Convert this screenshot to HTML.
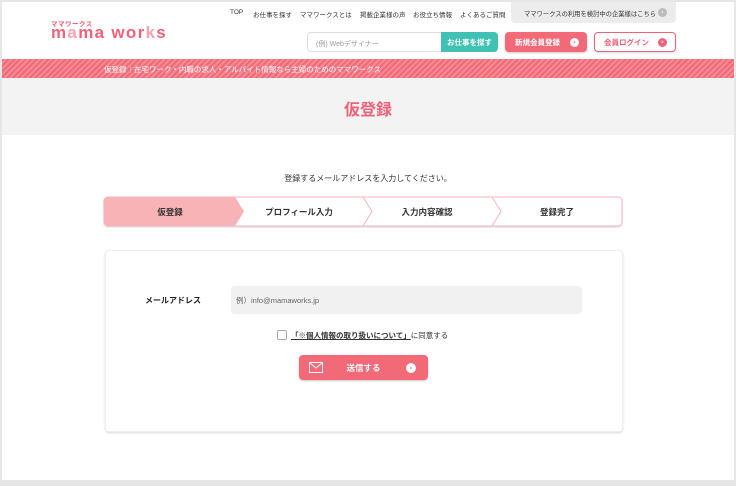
<!DOCTYPE html>
<html><head><meta charset="utf-8"><style>
*{margin:0;padding:0;box-sizing:border-box}
body{width:736px;height:486px;background:#e6e6e6;font-family:"Liberation Sans","Noto Sans CJK JP",sans-serif;position:relative;overflow:hidden;color:#333}
.a{position:absolute}
.page{left:2px;top:2px;width:732px;height:478px;background:#fff}
.nav{font-size:6.5px;color:#333;white-space:nowrap}
.stripe{left:2px;top:59px;width:732px;height:19px;background:repeating-linear-gradient(135deg,#f06a78 0 2px,#f48a95 2px 4px)}
.btn{border-radius:4px;font-size:7.5px;font-weight:bold;display:flex;align-items:center}
.circ{width:9px;height:9px;border-radius:50%;background:#fff;position:absolute;right:8px;top:50%;margin-top:-4.5px;font-size:7px;line-height:9px;text-align:center;font-weight:bold;font-family:"DejaVu Sans",sans-serif}
</style></head><body>
<div class="a page"></div>
<!-- logo -->
<div class="a" style="left:51px;top:18px;font-size:6.5px;color:#f0627a;letter-spacing:.5px;font-weight:bold">ママワークス</div>
<div class="a" style="left:51px;top:24px;font-size:17px;font-weight:bold;color:#f0627a;letter-spacing:1.3px;line-height:18px">m<span style="color:#f7a2ae">a</span>ma wor<span style="color:#f7a2ae">k</span>s</div>
<!-- top nav -->
<div class="a nav" style="left:230px;top:9px">TOP</div>
<div class="a nav" style="left:253px;top:9px">お仕事を探す</div>
<div class="a nav" style="left:300px;top:9px">ママワークスとは</div>
<div class="a nav" style="left:360px;top:9px">掲載企業様の声</div>
<div class="a nav" style="left:413px;top:9px">お役立ち情報</div>
<div class="a nav" style="left:460px;top:9px">よくあるご質問</div>
<div class="a" style="left:511px;top:2px;width:165px;height:21px;background:#ececec;border-radius:0 0 4px 4px"></div>
<div class="a nav" style="left:524px;top:9px;font-size:6.3px">ママワークスの利用を検討中の企業様はこちら</div>
<div class="a circ" style="left:658px;top:8px;margin:0;background:#bbb;color:#ececec">›</div>
<!-- search -->
<div class="a" style="left:307px;top:32px;width:136px;height:20px;border:1px solid #ddd;border-radius:4px 0 0 4px;font-size:7px;color:#999;padding:6px 8px">(例) Webデザイナー</div>
<div class="a btn" style="left:441px;top:32px;width:57px;height:20px;background:#3fc2b3;color:#fff;border-radius:0 4px 4px 0;justify-content:center">お仕事を探す</div>
<div class="a btn" style="left:505px;top:32px;width:82px;height:20px;background:#f26a78;color:#fff;padding-left:10px;box-shadow:0 1px 2px rgba(0,0,0,.2)">新規会員登録<span class="circ" style="color:#f26a78">›</span></div>
<div class="a btn" style="left:594px;top:32px;width:82px;height:20px;background:#fff;color:#f0627a;border:1px solid #f0627a;padding-left:9px;box-shadow:0 1px 2px rgba(0,0,0,.15)">会員ログイン<span class="circ" style="background:#f0627a;color:#fff">›</span></div>
<!-- stripe -->
<div class="a stripe"></div>
<div class="a" style="left:104px;top:64px;font-size:7.5px;color:#fff;white-space:nowrap">仮登録｜在宅ワーク・内職の求人・アルバイト情報なら主婦のためのママワークス</div>
<!-- title band -->
<div class="a" style="left:2px;top:78px;width:732px;height:57px;background:#f3f3f3"></div>
<div class="a" style="left:0;top:96px;width:736px;text-align:center;font-size:16px;font-weight:bold;color:#f0627a">仮登録</div>
<div class="a" style="left:0;top:173px;width:736px;text-align:center;font-size:8px;color:#333">登録するメールアドレスを入力してください。</div>
<!-- steps -->
<svg class="a" style="left:103px;top:196px" width="521" height="32" viewBox="0 0 521 32">
<defs><filter id="s"><feDropShadow dx="0" dy="1" stdDeviation="0.7" flood-opacity=".15"/></filter></defs>
<rect x="1" y="1" width="518" height="29" rx="4" fill="#fff" stroke="#f6b5bb" filter="url(#s)"/>
<path d="M5 1 H132 L141 15.5 L132 30 H5 Q1 30 1 26 V5 Q1 1 5 1Z" fill="#f7b3b5"/>
<path d="M260 1 L269 15.5 L260 30" fill="none" stroke="#f6b5bb"/>
<path d="M389 1 L398 15.5 L389 30" fill="none" stroke="#f6b5bb"/>
<text x="67" y="19" font-size="8.5" font-weight="bold" fill="#333" text-anchor="middle" font-family="Liberation Sans,Noto Sans CJK JP,sans-serif">仮登録</text>
<text x="196" y="19" font-size="8.5" font-weight="bold" fill="#333" text-anchor="middle" font-family="Liberation Sans,Noto Sans CJK JP,sans-serif">プロフィール入力</text>
<text x="324" y="19" font-size="8.5" font-weight="bold" fill="#333" text-anchor="middle" font-family="Liberation Sans,Noto Sans CJK JP,sans-serif">入力内容確認</text>
<text x="454" y="19" font-size="8.5" font-weight="bold" fill="#333" text-anchor="middle" font-family="Liberation Sans,Noto Sans CJK JP,sans-serif">登録完了</text>
</svg>
<!-- form card -->
<div class="a" style="left:105px;top:250px;width:518px;height:182px;background:#fff;border:1px solid #eee;border-radius:4px;box-shadow:0 1px 2px rgba(0,0,0,.15)"></div>
<div class="a" style="left:145px;top:295px;font-size:8px;font-weight:bold;color:#222">メールアドレス</div>
<div class="a" style="left:231px;top:286px;width:351px;height:28px;background:#f1f1f1;border-radius:4px;font-size:7.5px;color:#666;padding:9px 5px">例）info@mamaworks.jp</div>
<div class="a" style="left:277px;top:330px;width:10px;height:10px;border:1px solid #aaa;border-radius:2px;background:#fff"></div>
<div class="a" style="left:291px;top:330px;font-size:7.5px;color:#333;white-space:nowrap"><span style="text-decoration:underline;font-weight:bold">「※個人情報の取り扱いについて」</span>に同意する</div>
<div class="a btn" style="left:299px;top:355px;width:129px;height:25px;background:#f26a78;color:#fff;justify-content:center;box-shadow:0 1px 2px rgba(0,0,0,.2);font-size:8.5px">送信する</div>
<svg class="a" style="left:309px;top:362px" width="14" height="11"><rect x=".5" y=".5" width="13" height="10" fill="none" stroke="#fff"/><path d="M1 1 L7 6 L13 1" fill="none" stroke="#fff"/></svg>
<div class="a circ" style="left:406px;top:363px;margin:0;width:10px;height:10px;line-height:10px;color:#f26a78">›</div>
</body></html>
